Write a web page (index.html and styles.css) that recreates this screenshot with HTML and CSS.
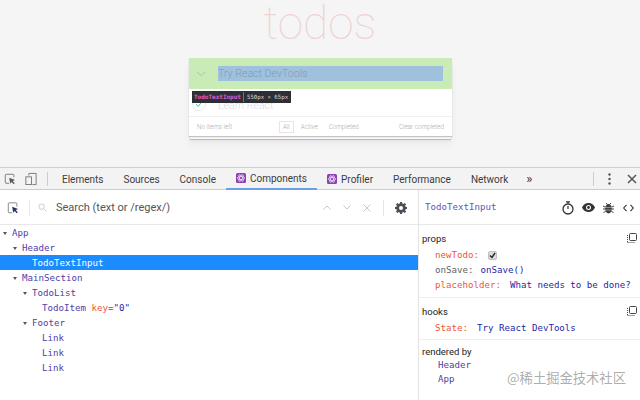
FILE: index.html
```html
<!DOCTYPE html>
<html lang="en">
<head>
<meta charset="utf-8">
<title>React DevTools</title>
<link rel="stylesheet" href="styles.css">
</head>
<body>
<div class="app">
  <section class="page">
    <h1 class="title">todos</h1>
    <div class="card">
      <div class="card-head">
        <svg class="chevron" width="10" height="6" viewBox="0 0 10 6"><path d="M1 1l4 3.5L9 1" fill="none" stroke="#a9c9a0" stroke-width="1"/></svg>
        <div class="head-input">Try React DevTools</div>
      </div>
      <div class="todo-row">
        <svg class="todo-check" width="14" height="14" viewBox="0 0 14 14"><circle cx="7" cy="7" r="6.5" fill="none" stroke="#dceee8"/><path d="M4 7l2.2 2.4L10 4.6" fill="none" stroke="#5dc2af"/></svg>
        <span class="todo-text">Learn React</span>
      </div>
      <div class="card-foot">
        <span class="left-count">No items left</span>
        <div class="filters">
          <span class="filter filter-on">All</span>
          <span class="filter">Active</span>
          <span class="filter">Completed</span>
        </div>
        <span class="clear">Clear completed</span>
      </div>
      <div class="tag"><span class="tag-name">TodoTextInput</span><span class="tag-size">550px × 65px</span></div>
    </div>
  </section>

  <section class="devtools">
    <nav class="tabbar">
      <svg class="tool-icon" width="12" height="12" viewBox="0 0 14 14"><path d="M6 12H2.500a1 1 0 0 1-1-1V2.500a1 1 0 0 1 1-1h8a1 1 0 0 1 1 1V5" fill="none" stroke="#6e6e6e"/><path d="M6 5.500l7 2.700-2.800 1.200 2.300 2.600-1.200 1-2.300-2.600L7.300 12.500z" fill="#5a5a5a"/></svg>
      <svg class="tool-icon device" width="12" height="14" viewBox="0 0 14 16"><path d="M4.500 4V1.500h8.500v13H8.500" fill="none" stroke="#6e6e6e"/><rect x="1" y="5.500" width="6.500" height="9" fill="none" stroke="#6e6e6e"/></svg>
      <span class="tab-sep"></span>
      <div class="tabs">
        <span class="tab">Elements</span>
        <span class="tab">Sources</span>
        <span class="tab">Console</span>
        <span class="tab tab-on">
          <svg class="react" width="10" height="10" viewBox="0 0 10 10"><rect width="10" height="10" rx="1.500" fill="#8d3fb5"/><g fill="none" stroke="#f2e4f8" stroke-width=".7"><ellipse cx="5" cy="5" rx="3.800" ry="1.500"/><ellipse cx="5" cy="5" rx="3.800" ry="1.500" transform="rotate(60 5 5)"/><ellipse cx="5" cy="5" rx="3.800" ry="1.500" transform="rotate(120 5 5)"/></g></svg>
          Components
        </span>
        <span class="tab">
          <svg class="react" width="10" height="10" viewBox="0 0 10 10"><rect width="10" height="10" rx="1.500" fill="#8d3fb5"/><g fill="none" stroke="#f2e4f8" stroke-width=".7"><ellipse cx="5" cy="5" rx="3.800" ry="1.500"/><ellipse cx="5" cy="5" rx="3.800" ry="1.500" transform="rotate(60 5 5)"/><ellipse cx="5" cy="5" rx="3.800" ry="1.500" transform="rotate(120 5 5)"/></g></svg>
          Profiler
        </span>
        <span class="tab">Performance</span>
        <span class="tab">Network</span>
        <span class="more">»</span>
      </div>
      <span class="tab-sep end-sep"></span>
      <svg class="kebab" width="3" height="12" viewBox="0 0 3 12"><circle cx="1.500" cy="1.500" r="1.200" fill="#555"/><circle cx="1.500" cy="6" r="1.200" fill="#555"/><circle cx="1.500" cy="10.500" r="1.200" fill="#555"/></svg>
      <svg class="close" width="10" height="10" viewBox="0 0 10 10"><path d="M1 1l8 8M9 1l-8 8" stroke="#555" stroke-width="1.500"/></svg>
    </nav>

    <div class="panes">
      <div class="tree-pane">
        <div class="search">
          <svg class="pick" width="12" height="12" viewBox="0 0 14 14"><path d="M6 12.500H2.500a1 1 0 0 1-1-1V2a1 1 0 0 1 1-1h8a1 1 0 0 1 1 1v3.500" fill="none" stroke="#777"/><path d="M6 5.500l7 2.700-2.800 1.200 2.300 2.600-1.200 1-2.300-2.600L7.300 12.500z" fill="#26365f"/></svg>
          <span class="v-sep"></span>
          <svg class="lens" width="9" height="9" viewBox="0 0 10 10"><circle cx="4" cy="4" r="3" fill="none" stroke="#c4c4c4"/><path d="M6.200 6.200L9.500 9.500" stroke="#c4c4c4"/></svg>
          <span class="search-text">Search (text or /regex/)</span>
          <span class="search-tools">
            <svg width="8" height="5" viewBox="0 0 8 5"><path d="M.5 4.500L4 1l3.500 3.500" fill="none" stroke="#c8c8c8"/></svg>
            <svg width="8" height="5" viewBox="0 0 8 5"><path d="M.5.500L4 4 7.500.500" fill="none" stroke="#c8c8c8"/></svg>
            <svg width="8" height="8" viewBox="0 0 8 8"><path d="M.5.500l7 7M7.500.500l-7 7" stroke="#c8c8c8"/></svg>
          </span>
          <span class="v-sep sep-right"></span>
          <svg class="gear" width="12" height="12" viewBox="0 0 12 12"><path fill-rule="evenodd" fill="#4a4f57" d="M5 0h2l.3 1.600 1 .4L9.700 1l1.400 1.400-1 1.400.4 1 1.500.2v2l-1.500.3-.4 1 1 1.300-1.400 1.400-1.400-1-1 .4L7 12H5l-.3-1.600-1-.4-1.400 1L.9 9.600l1-1.300-.4-1L0 7V5l1.500-.2.400-1-1-1.400L2.300 1l1.400 1 1-.4zM6 4a2 2 0 1 0 0 4 2 2 0 0 0 0-4z"/></svg>
        </div>
        <ul class="tree">
          <li class="node d0"><i class="arrow"></i><b>App</b></li>
          <li class="node d1"><i class="arrow"></i><b>Header</b></li>
          <li class="node d2 selected"><b>TodoTextInput</b></li>
          <li class="node d1"><i class="arrow"></i><b>MainSection</b></li>
          <li class="node d2"><i class="arrow"></i><b>TodoList</b></li>
          <li class="node d3"><b>TodoItem</b> <span class="key">key</span><span class="eq">=</span><span class="keyval">"0"</span></li>
          <li class="node d2"><i class="arrow"></i><b>Footer</b></li>
          <li class="node d3"><b>Link</b></li>
          <li class="node d3"><b>Link</b></li>
          <li class="node d3"><b>Link</b></li>
        </ul>
      </div>
      <aside class="side">
        <header class="side-head">
          <span class="side-name">TodoTextInput</span>
          <span class="side-icons">
            <svg width="12" height="14" viewBox="0 0 12 14"><path d="M4 .8h4M6 .8v2" stroke="#333" stroke-width="1.200"/><circle cx="6" cy="8" r="5" fill="none" stroke="#333" stroke-width="1.300"/><path d="M6 8V5" stroke="#333" stroke-width="1.200"/></svg>
            <svg width="13" height="9" viewBox="0 0 13 9"><path fill-rule="evenodd" fill="#333" d="M6.500 0C9.500 0 12 2 13 4.500 12 7 9.500 9 6.500 9S1 7 0 4.500C1 2 3.500 0 6.500 0zm0 2a2.500 2.500 0 1 0 0 5 2.500 2.500 0 0 0 0-5z"/><circle cx="6.500" cy="4.500" r="1.400" fill="#333"/></svg>
            <svg width="11" height="12" viewBox="0 0 11 12"><ellipse cx="5.500" cy="6.800" rx="3.500" ry="4.700" fill="#3c3f46"/><path d="M3 1l1.500 1.500M8 1L6.500 2.500M0 4l2 1M11 4L9 5M0 7h2M11 7H9M.5 10.500l2-1M10.500 10.500l-2-1" stroke="#3c3f46"/><path d="M2 5.500h7M2 8h7" stroke="#c8c8c8" stroke-width=".6"/></svg>
            <svg class="code-icon" width="11" height="8" viewBox="0 0 11 8"><path d="M3.500.8L.7 4l2.800 3.200M7.500.8L10.300 4 7.500 7.200" fill="none" stroke="#333" stroke-width="1.100"/></svg>
          </span>
        </header>
        <section class="block block-props">
          <div class="block-title"><span>props</span>
            <svg class="copy" width="10" height="10" viewBox="0 0 10 10"><rect x="2.500" y=".5" width="7" height="7" rx="1" fill="none" stroke="#444"/><path d="M.5 2v8M.5 9.500H8" stroke="#444" stroke-dasharray="1 1"/></svg>
          </div>
          <div class="prop"><span class="pk hot">newTodo:</span><span class="checkbox"><svg width="7" height="7" viewBox="0 0 7 7"><path d="M1 3.500l2 2L6 1" fill="none" stroke="#222" stroke-width="1.400"/></svg></span></div>
          <div class="prop prop-fn"><span class="pk">onSave:</span><span class="pv">onSave()</span></div>
          <div class="prop"><span class="pk hot">placeholder:</span><span class="pv">What needs to be done?</span></div>
        </section>
        <section class="block block-hooks">
          <div class="block-title"><span>hooks</span>
            <svg class="copy" width="10" height="10" viewBox="0 0 10 10"><rect x="2.500" y=".5" width="7" height="7" rx="1" fill="none" stroke="#444"/><path d="M.5 2v8M.5 9.500H8" stroke="#444" stroke-dasharray="1 1"/></svg>
          </div>
          <div class="prop"><span class="pk hot">State:</span><span class="pv">Try React DevTools</span></div>
        </section>
        <section class="block block-owners">
          <div class="block-title"><span>rendered by</span></div>
          <div class="owner">Header</div>
          <div class="owner">App</div>
        </section>
      </aside>
    </div>
  </section>
  <div class="watermark">@稀土掘金技术社区</div>
</div>
</body>
</html>
```

FILE: styles.css
```css
* { box-sizing: border-box; }
html, body { margin: 0; padding: 0; }
body { font-family: "Roboto", "Liberation Sans", sans-serif; background: #fff; }
svg { display: block; flex: none; }
.app { position: relative; width: 640px; height: 400px; overflow: hidden; display: flex; flex-direction: column; }

/* inspected page */
.page { height: 167px; background: #f5f5f5; display: flex; flex-direction: column; align-items: center; flex: none; }
.title { margin: 0; height: 58px; font: 100 46px/46px "Roboto", sans-serif; color: #efd3d3; text-align: center; }
.card { position: relative; width: 263px; height: 78px; margin-left: 1px; background: #fff; box-shadow: 0 1px 1px rgba(0,0,0,.2), 0 4px 0 -1px #f6f6f6, 0 5px 1px -1px rgba(0,0,0,.2), 0 8px 8px rgba(0,0,0,.05); display: flex; flex-direction: column; }
.card-head { height: 31px; background: #c9ebb5; display: flex; align-items: center; padding: 0 9px 0 7px; flex: none; }
.chevron { margin-right: 12px; }
.head-input { flex: 1; height: 15px; background: #a0c1de; font: 300 10.600px/15px "Roboto", sans-serif; color: #7d9bb8; }
.todo-row { height: 28px; display: flex; align-items: center; padding: 0 0 0 3px; border-bottom: 1px solid #f0f0f0; flex: none; }
.todo-text { margin-left: 12px; margin-top: 6px; font: 300 10.600px/14px "Roboto", sans-serif; color: #dcdcdc; }
.todo-check { margin-top: 2px; }
.card-foot { flex: 1; display: flex; align-items: center; padding: 0 8px; font: 300 6.300px/8px "Roboto", sans-serif; color: #aaa; }
.left-count { width: 82px; }
.filters { display: flex; align-items: center; gap: 7px; flex: 1; }
.filter { padding: 1px 0; }
.filter:last-child { margin-left: 4px; }
.filter-on { padding: 1px 3px; border: 1px solid #f2e0e0; }

.tag { position: absolute; left: 3px; top: 33px; height: 12px; width: 99px; background: #2d2f36; display: flex; align-items: center; font: 700 6px/12px "DejaVu Sans Mono", monospace; }
.tag-name { color: #e25ccb; padding: 0 2px 0 2px; border-right: 1px solid #6f7178; height: 10px; line-height: 10px; }
.tag-size { color: #dcdcdc; padding-left: 3px; white-space: nowrap; font-weight: 400; font-size: 5.700px; }

/* devtools */
.devtools { flex: 1; display: flex; flex-direction: column; min-height: 0; }
.tabbar { height: 23px; flex: none; background: #f3f3f3; border-top: 1px solid #d0d0d0; border-bottom: 1px solid #cbcbcb; display: flex; align-items: center; padding-left: 4px; }
.tool-icon { margin-right: 9px; }
.device { margin-right: 10px; }
.tab-sep { width: 1px; height: 14px; background: #ccc; }
.tabs { display: flex; align-items: stretch; height: 100%; margin-left: 4px; flex: 1; }
.tab { display: flex; align-items: center; gap: 4px; padding: 0 10px; font-size: 10px; color: #3c3c3c; height: 22px; white-space: nowrap; }
.tab-on { border-bottom: 2px solid #6f9ee8; margin-bottom: -1px; }
.more { display: flex; align-items: center; margin-left: 8px; font-size: 13px; color: #333; }
.end-sep { margin: 0 14px 0 0; }
.kebab { margin-right: 16.500px; }
.close { margin-right: 3px; }

.panes { flex: 1; display: flex; min-height: 0; }
.tree-pane { width: 419px; flex: none; border-right: 1px solid #e2e2e2; display: flex; flex-direction: column; }
.search { height: 35px; flex: none; border-bottom: 1px solid #e8e8e8; display: flex; align-items: center; padding: 1px 0 0 7px; }
.v-sep { width: 1px; height: 16px; background: #e6e6e6; margin-left: 10px; }
.lens { margin-left: 8px; }
.search-text { margin-left: 9px; font-size: 11px; color: #555; }
.search-tools { margin-left: auto; display: flex; align-items: center; gap: 12px; }
.sep-right { margin-left: 12px; }
.gear { margin: 0 11px 0 11px; }

.tree { list-style: none; margin: 0; padding: 0; font: 9.150px/16px "DejaVu Sans Mono", monospace; color: #5040a8; }
.node { height: 15px; position: relative; white-space: pre; }
.node b { font-weight: 400; }
.d0 { padding-left: 12px; }
.d1 { padding-left: 22px; }
.d2 { padding-left: 32px; }
.d3 { padding-left: 42px; }
.arrow { position: absolute; top: 7px; width: 0; height: 0; border: 2.500px solid transparent; border-top: 3px solid #555; border-bottom: 0; }
.d0 .arrow { left: 3px; }
.d1 .arrow { left: 13px; }
.d2 .arrow { left: 23px; }
.selected { background: #1a8cff; color: #fff; }
.key { color: #f0553a; }
.eq { color: #555; }
.keyval { color: #1f1fa8; }

.side { flex: 1; min-width: 0; display: flex; flex-direction: column; }
.side-head { height: 35px; flex: none; border-bottom: 1px solid #e8e8e8; display: flex; align-items: center; padding: 1px 6px 0 6px; }
.side-name { font: 9.150px/15px "DejaVu Sans Mono", monospace; color: #6a51b8; }
.side-icons { margin-left: auto; display: flex; align-items: center; gap: 8px; }
.code-icon { margin-left: 1px; }
.block { border-bottom: 1px solid #eee; padding-left: 3px; }
.block-props { padding-top: 6px; padding-bottom: 4px; }
.block-hooks { padding-top: 6px; padding-bottom: 3px; }
.block-owners { padding-top: 4px; border-bottom: 0; }
.block-title { display: flex; justify-content: space-between; align-items: center; height: 14px; padding-right: 3px; font-size: 9.500px; color: #222; }
.prop { height: 15px; padding-left: 13px; display: flex; align-items: center; gap: 9px; font: 9.150px/15px "DejaVu Sans Mono", monospace; white-space: pre; }
.prop-fn { gap: 7px; }
.block-title + .prop { margin-top: 3px; }
.pk { color: #5f6368; }
.pk.hot { color: #f0553a; }
.pv { color: #1f1fa8; }
.checkbox { width: 9px; height: 9px; background: #dcdcdc; border: 1px solid #c0c0c0; border-radius: 2px; display: flex; align-items: center; justify-content: center; }
.owner { height: 14px; padding-left: 16px; font: 9.150px/14px "DejaVu Sans Mono", monospace; color: #5040a8; }

.watermark { position: absolute; left: 507px; top: 369px; font: 13.300px/18px "Noto Sans CJK SC", sans-serif; color: rgba(120,120,120,.62); white-space: nowrap; text-shadow: 0 0 1px rgba(255,255,255,.8); }
```
